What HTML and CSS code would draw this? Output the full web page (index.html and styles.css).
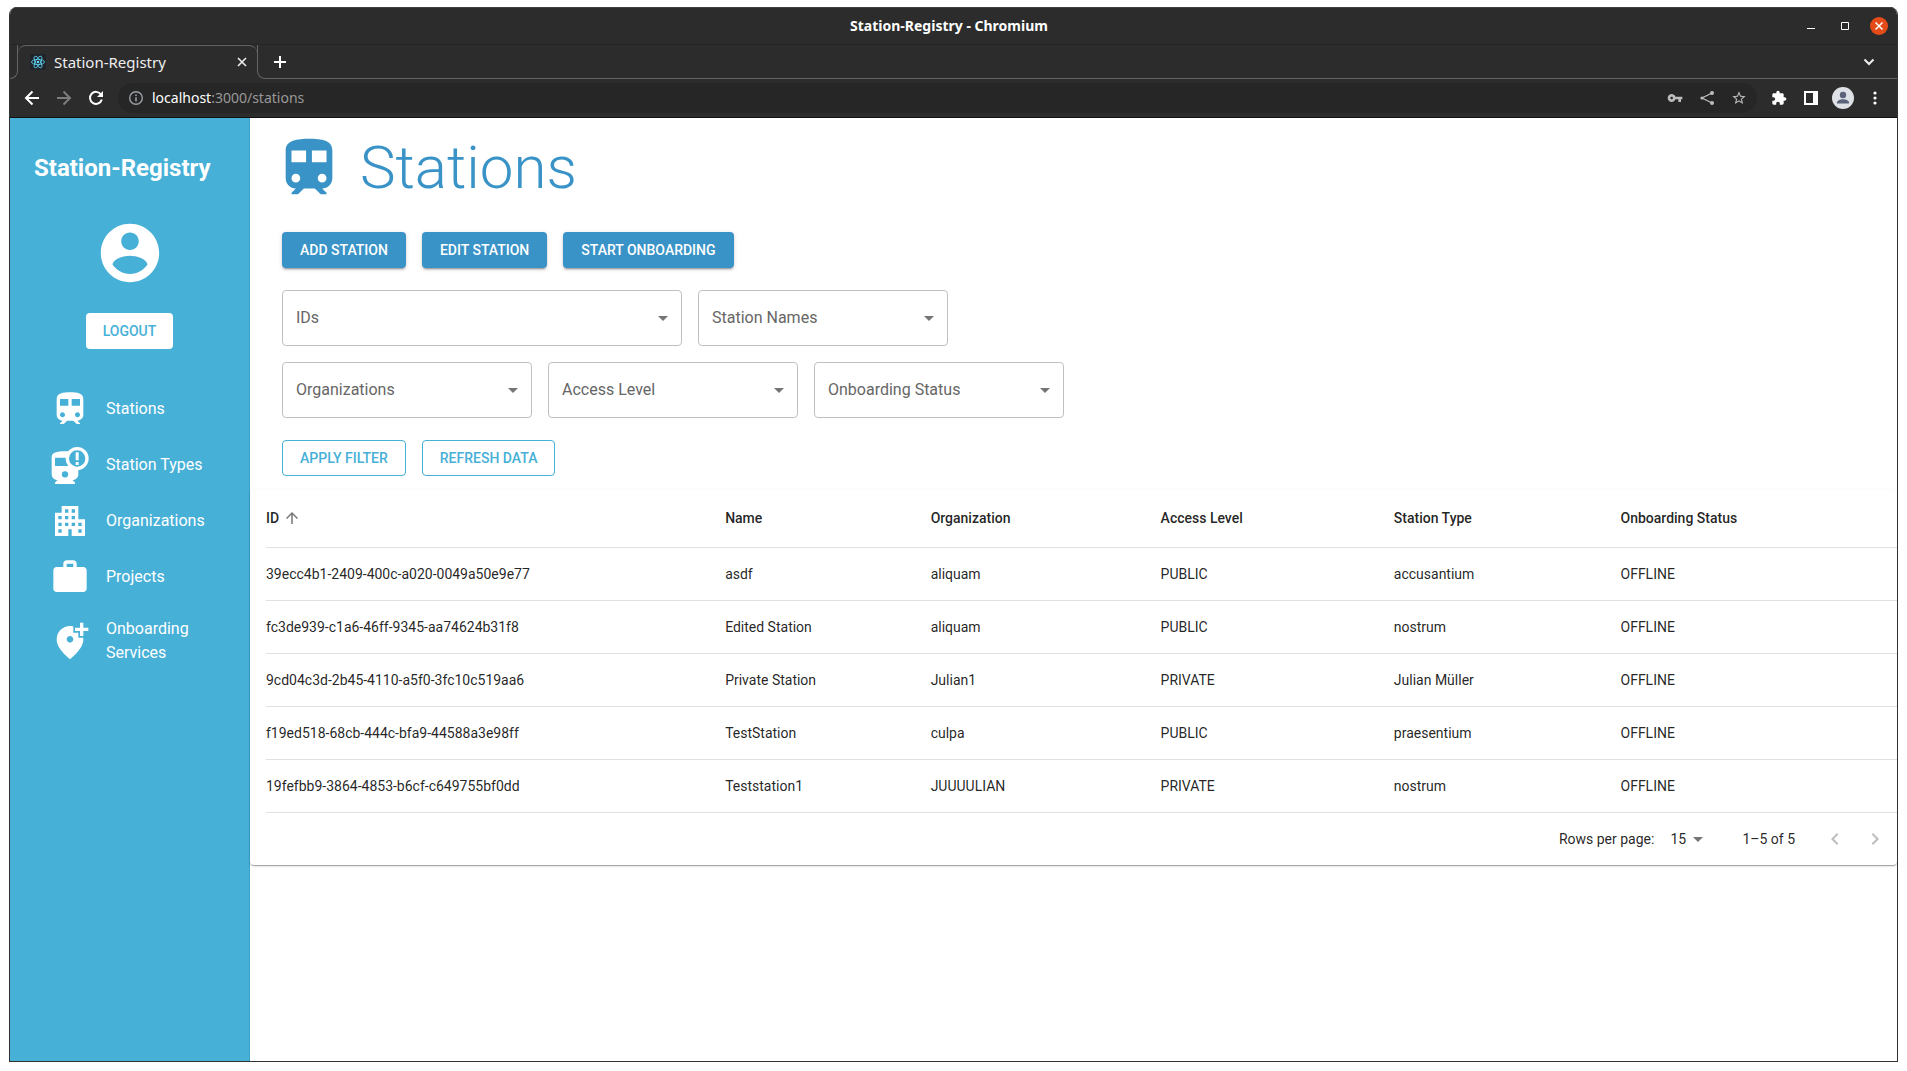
FILE: index.html
```html
<!DOCTYPE html>
<html lang="en">
<head>
<meta charset="utf-8">
<title>Station-Registry</title>
<link rel="stylesheet" href="styles.css">
</head>
<body>
<svg class="sprite" aria-hidden="true">
  <symbol id="train" viewBox="0 0 24 24"><path d="M12 2c-4 0-8 .5-8 4v9.500C4 17.430 5.570 19 7.500 19L6 20.500v.5h2.230l2-2H14l2 2h2v-.5L16.500 19c1.930 0 3.500-1.570 3.500-3.500V6c0-3.500-3.580-4-8-4zM7.500 17c-.83 0-1.500-.67-1.500-1.500S6.670 14 7.500 14s1.500.67 1.500 1.500S8.330 17 7.500 17zm3.500-7H6V6h5v4zm2 0V6h5v4h-5zm3.500 7c-.83 0-1.500-.67-1.500-1.500s.67-1.500 1.500-1.500 1.500.67 1.500 1.500-.67 1.500-1.500 1.500z"/></symbol>
  <symbol id="caret" viewBox="0 0 24 24"><path d="M7 10l5 5 5-5z"/></symbol>
</svg>
<div class="window">
  <header class="browser">
    <div class="titlebar">
      <span class="window-title">Station-Registry - Chromium</span>
      <div class="window-controls">
        <button class="chrome-btn" aria-label="Minimize"><svg width="18" height="18" viewBox="0 0 18 18"><path d="M5 11.500h8" stroke="#fff"/></svg></button>
        <button class="chrome-btn" aria-label="Maximize"><svg width="18" height="18" viewBox="0 0 18 18"><path d="M5.500 5.500h7v7h-7z" fill="none" stroke="#fff"/></svg></button>
        <button class="chrome-btn close" aria-label="Close"><svg width="18" height="18" viewBox="0 0 18 18"><path d="M5.500 5.500l7 7m0-7l-7 7" stroke="#fff" stroke-width="1.500"/></svg></button>
      </div>
    </div>
    <div class="tabs">
      <div class="tab-edge"></div>
      <div class="tab">
        <svg class="favicon" width="16" height="16" viewBox="0 0 16 16"><rect width="16" height="16" rx="2" fill="#20232a"/><g fill="none" stroke="#61dafb" stroke-width=".8"><ellipse cx="8" cy="8" rx="6.500" ry="2.600"/><ellipse cx="8" cy="8" rx="6.500" ry="2.600" transform="rotate(60 8 8)"/><ellipse cx="8" cy="8" rx="6.500" ry="2.600" transform="rotate(120 8 8)"/></g><circle cx="8" cy="8" r="1.300" fill="#61dafb"/></svg>
        <span>Station-Registry</span>
        <button class="chrome-btn tab-close" aria-label="Close tab"><svg width="16" height="16" viewBox="0 0 16 16"><path d="M4 4l8 8m0-8l-8 8" stroke="#eee" stroke-width="1.600"/></svg></button>
      </div>
      <div class="tab-rest">
        <button class="chrome-btn" aria-label="New tab"><svg width="16" height="16" viewBox="0 0 16 16"><path d="M8 2v12M2 8h12" stroke="#fff" stroke-width="2"/></svg></button>
        <button class="chrome-btn" aria-label="Search tabs"><svg width="16" height="16" viewBox="0 0 16 16"><path d="M3.500 5.500L8 10l4.500-4.500" fill="none" stroke="#eee" stroke-width="2"/></svg></button>
      </div>
    </div>
    <div class="toolbar">
      <div class="tools">
        <button class="chrome-btn" aria-label="Back"><svg width="16" height="16" viewBox="0 0 16 16"><path d="M15 8H2m6.500-6.500L2 8l6.500 6.500" fill="none" stroke="#fff" stroke-width="2"/></svg></button>
        <button class="chrome-btn" aria-label="Forward"><svg width="16" height="16" viewBox="0 0 16 16"><path d="M1 8h13M7.500 1.500L14 8l-6.500 6.500" fill="none" stroke="#7d7d7d" stroke-width="2"/></svg></button>
        <button class="chrome-btn" aria-label="Reload"><svg width="16" height="16" viewBox="0 0 16 16"><path d="M13 4.500A6 6 0 1 0 13.800 9.500" fill="none" stroke="#fff" stroke-width="2"/><path d="M15 1v6H9z" fill="#fff"/></svg></button>
      </div>
      <div class="address">
        <svg width="16" height="16" viewBox="0 0 16 16"><circle cx="8" cy="8" r="6.300" fill="none" stroke="#9aa0a6" stroke-width="1.400"/><path d="M8 7.200v4.300M8 4.400v1.600" stroke="#9aa0a6" stroke-width="1.600"/></svg>
        <span class="url"><b>localhost</b>:3000/stations</span>
        <div class="address-icons">
          <svg width="16" height="16" viewBox="0 0 24 24"><path fill="#bdbdbd" d="M12.650 10C11.830 7.670 9.610 6 7 6c-3.310 0-6 2.690-6 6s2.690 6 6 6c2.610 0 4.830-1.670 5.650-4H17v4h4v-4h2v-4H12.650zM7 14c-1.100 0-2-.9-2-2s.9-2 2-2 2 .9 2 2-.9 2-2 2z"/></svg>
          <svg width="16" height="16" viewBox="0 0 16 16"><path d="M13 3L3 8l10 5" fill="none" stroke="#bdbdbd" stroke-width="1.300"/><g fill="#bdbdbd"><circle cx="13" cy="3" r="2"/><circle cx="3" cy="8" r="1.600"/><circle cx="13" cy="13" r="2"/></g></svg>
          <svg width="16" height="16" viewBox="0 0 24 24"><path fill="#bdbdbd" d="M22 9.240l-7.190-.62L12 2 9.190 8.630 2 9.240l5.460 4.730L5.820 21 12 17.270 18.180 21l-1.630-7.030L22 9.240zM12 15.400l-3.760 2.270 1-4.280-3.320-2.880 4.380-.38L12 6.100l1.710 4.040 4.380.38-3.320 2.880 1 4.280L12 15.400z"/></svg>
        </div>
      </div>
      <div class="tools">
        <button class="chrome-btn" aria-label="Extensions"><svg width="16" height="16" viewBox="0 0 24 24"><path fill="#fff" d="M20.500 11H19V7c0-1.100-.9-2-2-2h-4V3.500C13 2.120 11.880 1 10.500 1S8 2.120 8 3.500V5H4c-1.100 0-1.990.9-1.990 2v3.800H3.500c1.490 0 2.700 1.210 2.700 2.700s-1.210 2.700-2.700 2.700H2V20c0 1.100.9 2 2 2h3.800v-1.500c0-1.490 1.210-2.700 2.700-2.700s2.700 1.210 2.700 2.700V22H17c1.100 0 2-.9 2-2v-4h1.500c1.380 0 2.500-1.120 2.500-2.500S21.880 11 20.500 11z"/></svg></button>
        <button class="chrome-btn" aria-label="Side panel"><svg width="14" height="14" viewBox="0 0 14 14"><path fill="#fff" fill-rule="evenodd" d="M0 0h14v14H0zM2 2v10h7V2z"/></svg></button>
        <button class="chrome-btn" aria-label="Profile"><svg width="22" height="22" viewBox="0 0 22 22"><circle cx="11" cy="11" r="11" fill="#dee1e6"/><g fill="#5a6379"><circle cx="11" cy="8" r="3.200"/><path d="M5 16.500v-1c0-2 3-3.300 6-3.300s6 1.300 6 3.300v1z"/></g></svg></button>
        <button class="chrome-btn" aria-label="Menu"><svg width="16" height="16" viewBox="0 0 16 16" fill="#fff"><circle cx="8" cy="3" r="1.600"/><circle cx="8" cy="8" r="1.600"/><circle cx="8" cy="13" r="1.600"/></svg></button>
      </div>
    </div>
  </header>
  <div class="app">
    <aside class="sidebar">
      <div class="brand">Station-Registry</div>
      <svg class="avatar" viewBox="0 0 24 24"><path d="M12 2C6.480 2 2 6.480 2 12s4.480 10 10 10 10-4.480 10-10S17.520 2 12 2zm0 3c1.660 0 3 1.340 3 3s-1.340 3-3 3-3-1.340-3-3 1.340-3 3-3zm0 14.200c-2.500 0-4.710-1.280-6-3.220.03-1.990 4-3.080 6-3.080 1.990 0 5.970 1.090 6 3.080-1.290 1.940-3.500 3.220-6 3.220z"/></svg>
      <button class="btn logout">LOGOUT</button>
      <nav>
        <a href="#stations"><svg viewBox="0 0 24 24"><use href="#train"/></svg><span>Stations</span></a>
        <a href="#types"><svg viewBox="0 0 24 24"><path fill-rule="evenodd" d="M9 3.800C4 3.800 1 4.500 1 7.500V17.500C1 19.400 2.500 21 4.500 21L3 22.500v.9h12v-.9L13.500 21c2 0 3.500-1.600 3.500-3.500V3.800zM3 7.700h8v4.900H3zM9 15.700a1.900 1.900 0 1 1 0 3.800 1.900 1.900 0 1 1 0-3.800z"/><circle class="badge" cx="16.300" cy="8.100" r="5.900"/><path d="M15.400 4.400h1.800v4.800h-1.800zM15.400 10.200h1.800v1.800h-1.800z"/></svg><span>Station Types</span></a>
        <a href="#organizations"><svg viewBox="0 0 24 24"><path d="M17 11V3H7v4H3v14h8v-4h2v4h8V11h-4zM7 19H5v-2h2v2zm0-4H5v-2h2v2zm0-4H5V9h2v2zm4 4H9v-2h2v2zm0-4H9V9h2v2zm0-4H9V5h2v2zm4 8h-2v-2h2v2zm0-4h-2V9h2v2zm0-4h-2V5h2v2zm4 12h-2v-2h2v2zm0-4h-2v-2h2v2z"/></svg><span>Organizations</span></a>
        <a href="#projects"><svg viewBox="0 0 24 24"><path d="M20 6h-4V4c0-1.110-.89-2-2-2h-4c-1.110 0-2 .89-2 2v2H4c-1.110 0-1.990.89-1.990 2L2 19c0 1.110.89 2 2 2h16c1.110 0 2-.89 2-2V8c0-1.110-.89-2-2-2zm-6 0h-4V4h4v2z"/></svg><span>Projects</span></a>
        <a href="#onboarding"><svg viewBox="0 0 24 24"><path d="M20 1v3h3v2h-3v3h-2V6h-3V4h3V1h2zm-8 12c1.100 0 2-.9 2-2s-.9-2-2-2-2 .9-2 2 .9 2 2 2zm2-9.750V7h3v3h2.920c.05.39.08.79.08 1.200 0 3.320-2.670 7.250-8 11.800-5.330-4.550-8-8.480-8-11.800C4 6.220 7.800 3 12 3c.68 0 1.350.08 2 .25z"/></svg><span>Onboarding Services</span></a>
      </nav>
    </aside>
    <main>
      <h1><svg viewBox="0 0 24 24"><use href="#train"/></svg>Stations</h1>
      <div class="controls">
        <div class="row">
          <button class="btn primary">ADD STATION</button>
          <button class="btn primary">EDIT STATION</button>
          <button class="btn primary">START ONBOARDING</button>
        </div>
        <div class="filters">
          <div class="row">
            <div class="field wide"><select aria-label="IDs"><option>IDs</option></select><svg><use href="#caret"/></svg></div>
            <div class="field"><select aria-label="Station Names"><option>Station Names</option></select><svg><use href="#caret"/></svg></div>
          </div>
          <div class="row">
            <div class="field"><select aria-label="Organizations"><option>Organizations</option></select><svg><use href="#caret"/></svg></div>
            <div class="field"><select aria-label="Access Level"><option>Access Level</option></select><svg><use href="#caret"/></svg></div>
            <div class="field"><select aria-label="Onboarding Status"><option>Onboarding Status</option></select><svg><use href="#caret"/></svg></div>
          </div>
        </div>
        <div class="row">
          <button class="btn outlined">APPLY FILTER</button>
          <button class="btn outlined">REFRESH DATA</button>
        </div>
      </div>
      <section class="paper">
        <table>
          <colgroup><col class="c-id"><col class="c-name"><col class="c-org"><col class="c-access"><col class="c-type"><col></colgroup>
          <thead><tr>
            <th><span class="sort">ID<svg width="18" height="18" viewBox="0 0 24 24"><path d="M4 12l1.410 1.410L11 7.830V20h2V7.830l5.580 5.590L20 12l-8-8-8 8z"/></svg></span></th>
            <th>Name</th><th>Organization</th><th>Access Level</th><th>Station Type</th><th>Onboarding Status</th>
          </tr></thead>
          <tbody>
            <tr><td>39ecc4b1-2409-400c-a020-0049a50e9e77</td><td>asdf</td><td>aliquam</td><td>PUBLIC</td><td>accusantium</td><td>OFFLINE</td></tr>
            <tr><td>fc3de939-c1a6-46ff-9345-aa74624b31f8</td><td>Edited Station</td><td>aliquam</td><td>PUBLIC</td><td>nostrum</td><td>OFFLINE</td></tr>
            <tr><td>9cd04c3d-2b45-4110-a5f0-3fc10c519aa6</td><td>Private Station</td><td>Julian1</td><td>PRIVATE</td><td>Julian Müller</td><td>OFFLINE</td></tr>
            <tr><td>f19ed518-68cb-444c-bfa9-44588a3e98ff</td><td>TestStation</td><td>culpa</td><td>PUBLIC</td><td>praesentium</td><td>OFFLINE</td></tr>
            <tr><td>19fefbb9-3864-4853-b6cf-c649755bf0dd</td><td>Teststation1</td><td>JUUUULIAN</td><td>PRIVATE</td><td>nostrum</td><td>OFFLINE</td></tr>
          </tbody>
        </table>
        <div class="pagination">
          <label for="rows">Rows per page:</label>
          <div class="rows-select"><select id="rows"><option>15</option></select><svg><use href="#caret"/></svg></div>
          <span class="range">1–5 of 5</span>
          <button class="page-btn" disabled aria-label="Previous page"><svg viewBox="0 0 24 24"><path d="M15.410 7.410L14 6l-6 6 6 6 1.410-1.410L10.830 12z"/></svg></button>
          <button class="page-btn" disabled aria-label="Next page"><svg viewBox="0 0 24 24"><path d="M10 6L8.590 7.410 13.170 12l-4.580 4.590L10 18l6-6z"/></svg></button>
        </div>
      </section>
    </main>
  </div>
</div>
</body>
</html>
```
FILE: styles.css
```css
* { box-sizing: border-box; }
body {
  margin: 0;
  min-height: 100vh;
  padding: 7px 9px 9px;
  display: flex;
  background: #fff;
  font-family: Roboto, "Liberation Sans", sans-serif;
  font-size: 14px;
  line-height: 20px;
  color: rgba(0, 0, 0, .87);
}
button, select { font: inherit; }
svg { display: block; flex: none; }
.sprite { display: none; }

.window {
  flex: 1;
  min-width: 0;
  display: flex;
  flex-direction: column;
  border: 1px solid #333;
  border-top: 0;
  border-radius: 8px 8px 0 0;
  overflow: hidden;
}

/* Browser frame */
.browser {
  background: #2c2c2c;
  color: #eee;
  font-family: "Noto Sans", "Open Sans", sans-serif;
  border-bottom: 1px solid #111;
}
.chrome-btn {
  border: 0;
  padding: 0;
  background: none;
  display: flex;
  align-items: center;
  justify-content: center;
}
.titlebar {
  height: 38px;
  display: grid;
  grid-template-columns: 1fr auto 1fr;
  align-items: center;
  border-top: 1px solid #404040;
  border-bottom: 1px solid #242424;
  padding-right: 9px;
}
.window-title { grid-column: 2; font-weight: 700; color: #fff; }
.window-controls { display: flex; justify-content: flex-end; gap: 16px; }
.close { background: #e34c19; border-radius: 50%; }
.tabs { height: 34px; display: flex; }
.tab-edge {
  width: 8px;
  border-bottom: 1px solid #666;
  border-right: 1px solid #666;
  border-bottom-right-radius: 8px;
}
.tab {
  width: 239px;
  display: flex;
  align-items: center;
  gap: 8px;
  padding: 0 7px 2px 12px;
  font-size: 15px;
  border-top: 1px solid #666;
  border-radius: 8px 8px 0 0;
}
.tab-close { margin-left: auto; }
.tab-rest {
  flex: 1;
  display: flex;
  align-items: center;
  justify-content: space-between;
  padding: 0 20px 0 14px;
  border-bottom: 1px solid #666;
  border-left: 1px solid #666;
  border-bottom-left-radius: 8px;
}
.toolbar {
  height: 38px;
  display: flex;
  align-items: center;
  gap: 6px;
  padding: 0 6px;
}
.tools { display: flex; }
.tools .chrome-btn { width: 32px; height: 32px; }
.address {
  flex: 1;
  height: 30px;
  display: flex;
  align-items: center;
  gap: 8px;
  padding: 0 10px;
  border-radius: 15px;
  background: #262626;
  color: #999;
}
.url b { font-weight: 400; color: #fff; }
.address-icons { display: flex; gap: 16px; margin-left: auto; }

/* Application */
.app { flex: 1; display: flex; }
.sidebar {
  width: 240px;
  flex: none;
  display: flex;
  flex-direction: column;
  align-items: center;
  background: #46b0d7;
  border-right: 1px solid #3a9fc9;
  color: #fff;
}
.sidebar svg { fill: #fff; }
.sidebar .badge { fill: #46b0d7; stroke: #fff; stroke-width: 2; }
.brand {
  align-self: stretch;
  padding: 34px 24px;
  font-size: 24px;
  line-height: 32px;
  font-weight: 700;
}
.avatar { width: 70px; height: 70px; }
.btn {
  height: 36px;
  padding: 0 18px;
  border: 0;
  border-radius: 4px;
  font-weight: 500;
  cursor: pointer;
}
.logout { margin: 25px 0 32px; padding: 0 17px; background: #fff; color: #46b0d7; }
nav { align-self: stretch; }
nav a {
  min-height: 56px;
  padding: 8px 40px;
  display: flex;
  align-items: center;
  gap: 16px;
  color: #fff;
  font-size: 16px;
  line-height: 24px;
  text-decoration: none;
}
nav a:last-child { min-height: 72px; }
nav svg { width: 40px; height: 40px; }

main { flex: 1; min-width: 0; background: #fff; }
h1 {
  margin: 0;
  padding: 14px 24px 0;
  display: flex;
  align-items: center;
  gap: 16px;
  font-size: 60px;
  line-height: 72px;
  font-weight: 300;
  color: #3993c7;
}
h1 svg { width: 70px; height: 70px; fill: #3993c7; }
.controls {
  padding: 28px 32px 14px;
  display: flex;
  flex-direction: column;
  gap: 22px;
}
.filters { display: flex; flex-direction: column; gap: 16px; }
.row { display: flex; flex-wrap: wrap; gap: 16px; }
.primary {
  background: #3993c7;
  color: #fff;
  box-shadow: 0 3px 1px -2px rgba(0, 0, 0, .2), 0 2px 2px rgba(0, 0, 0, .14), 0 1px 5px rgba(0, 0, 0, .12);
}
.outlined { padding: 0 17px; background: #fff; color: #46b0d7; border: 1px solid #46b0d7; }
.field { position: relative; width: 250px; }
.field.wide { width: 400px; }
.field select {
  width: 100%;
  height: 56px;
  padding: 0 40px 0 13px;
  appearance: none;
  border: 1px solid #c0c0c0;
  border-radius: 4px;
  background: #fff;
  color: #666;
  font-size: 16px;
}
.field svg, .rows-select svg {
  position: absolute;
  right: 7px;
  top: 16px;
  width: 24px;
  height: 24px;
  fill: #757575;
  pointer-events: none;
}

/* Data table */
.paper {
  border-radius: 4px;
  box-shadow: 0 2px 1px -1px rgba(0, 0, 0, .2), 0 1px 1px rgba(0, 0, 0, .14), 0 1px 3px rgba(0, 0, 0, .12);
  padding-left: 16px;
}
table { width: 100%; border-collapse: collapse; table-layout: fixed; }
.c-id { width: 28.15%; }
.c-name { width: 12.6%; }
.c-org { width: 14.1%; }
.c-access { width: 14.3%; }
.c-type { width: 13.9%; }
th, td {
  height: 53px;
  padding: 0;
  text-align: left;
  border-bottom: 1px solid #e0e0e0;
}
th { height: 57px; font-weight: 500; }
.sort { display: flex; align-items: center; gap: 4px; }
.sort svg { fill: #757575; }
.pagination {
  height: 52px;
  display: flex;
  align-items: center;
  justify-content: flex-end;
  padding-right: 2px;
}
.rows-select { position: relative; margin: 0 32px 0 8px; }
.rows-select select {
  appearance: none;
  border: 0;
  padding: 0 24px 0 8px;
  background: none;
  color: inherit;
  height: 24px;
}
.rows-select svg { right: 0; top: 0; }
.range { margin-right: 20px; }
.page-btn { border: 0; background: none; padding: 8px; }
.page-btn svg { width: 24px; height: 24px; fill: #bdbdbd; }
```
